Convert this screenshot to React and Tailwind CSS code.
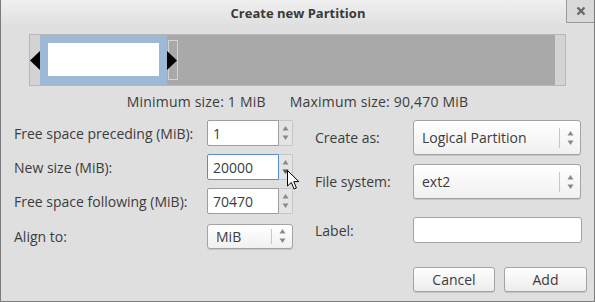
import React from 'react';

const font = { fontFamily: '"Open Sans", "Noto Sans", sans-serif' };

function Arrows({ dark }) {
  return (
    <svg width="7" height="16" viewBox="0 0 7 16">
      <path d="M3.5 1 L6.5 5.5 L0.5 5.5 Z" fill="#8a8a8a" />
      <path d="M0.5 10.5 L6.5 10.5 L3.5 15 Z" fill={dark ? '#555' : '#8a8a8a'} />
    </svg>
  );
}

function Spin({ value, focused, dark }) {
  return (
    <div className="flex h-[26px]">
      <div
        className={`w-[72px] h-full bg-white rounded-l-[2px] border flex items-center pl-[5px] text-[14px] text-[#3c3c3c] ${
          focused ? 'border-[#5b8dd0]' : 'border-[#9d9d9d]'
        }`}
      >
        {value}
      </div>
      <div className="w-[14px] h-full border-t border-b border-r border-[#c6c6c6] rounded-r-[2px] bg-[#e4e4e4] flex items-center justify-center">
        <Arrows dark={dark} />
      </div>
    </div>
  );
}

function Combo({ value, w, h, sep }) {
  return (
    <div
      className={`${w} ${h} rounded-[3px] border border-[#a3a3a3] bg-gradient-to-b from-white to-[#f0f0f0] shadow-[0_1px_0_#c4c4c4] flex items-center text-[14px] text-[#3c3c3c]`}
    >
      <div className="flex-1 pl-[8px]">{value}</div>
      <div className={`w-px ${sep} bg-[#c6c6c6]`} />
      <div className="w-[20px] flex justify-center">
        <Arrows />
      </div>
    </div>
  );
}

function Button({ children, w }) {
  return (
    <div
      className={`${w} h-[25px] rounded-[3px] border border-[#a3a3a3] bg-gradient-to-b from-white to-[#ececec] shadow-[0_1px_0_#c4c4c4] flex items-center justify-center text-[14px] text-[#3c3c3c]`}
    >
      {children}
    </div>
  );
}

export default function App() {
  return (
    <div style={font} className="w-[595px] h-[302px] bg-[#dfdfdf] border-l border-r border-b border-[#7b7b7b] relative overflow-hidden text-[#3c3c3c]">
      {/* title bar */}
      <div className="h-[28px] flex bg-gradient-to-b from-[#f0f0f0] to-[#dedede]">
        <div className="w-[29px]" />
        <div className="flex-1 flex items-center justify-center text-[13px] font-bold text-[#3a3a3a]">
          Create new Partition
        </div>
        <div className="w-[28px] h-[23px] border-l border-b border-[#9a9a9a] bg-[#d9d9d9] flex items-center justify-center">
          <svg width="10" height="10" viewBox="0 0 10 10">
            <path d="M1.5 1.5 L8.5 8.5 M8.5 1.5 L1.5 8.5" stroke="#6a6a6a" strokeWidth="2.4" />
          </svg>
        </div>
      </div>

      {/* partition graphic */}
      <div className="relative mx-[28px] mt-[6px] h-[52px] border border-[#b8b8b8] bg-[#a9a9a9] flex">
        <div className="w-[10px] bg-[#d3d3d3]" />
        <div className="w-[127px] bg-[#9db9d5] pt-[8px] pb-[9px] px-[8px]">
          <div className="w-full h-full bg-white" />
        </div>
        <div className="flex-1" />
        <div className="w-[10px] bg-[#d3d3d3]" />
        <div className="absolute left-[138px] top-[5px] w-[10px] h-[40px] border border-[#d4d4d4]" />
        <svg className="absolute left-0 top-[16px]" width="10" height="19" viewBox="0 0 10 19">
          <path d="M0 9.5 L10 0 L10 19 Z" fill="#000" />
        </svg>
        <svg className="absolute left-[137px] top-[16px]" width="10" height="19" viewBox="0 0 10 19">
          <path d="M10 9.5 L0 0 L0 19 Z" fill="#000" />
        </svg>
      </div>

      <div className="mt-[7px] h-[16px] flex justify-center items-center gap-[24px] text-[14px] tracking-[0.2px]">
        <span>Minimum size: 1 MiB</span>
        <span>Maximum size: 90,470 MiB</span>
      </div>

      {/* form */}
      <div className="mt-[11px] flex">
        <div className="ml-[13px] w-[279px] flex flex-col gap-[8px] text-[14px]">
          <div className="flex items-center h-[26px]">
            <div className="w-[193px]">Free space preceding (MiB):</div>
            <Spin value="1" />
          </div>
          <div className="flex items-center h-[26px]">
            <div className="w-[193px]">New size (MiB):</div>
            <Spin value="20000" focused dark />
          </div>
          <div className="flex items-center h-[26px]">
            <div className="w-[193px]">Free space following (MiB):</div>
            <Spin value="70470" />
          </div>
          <div className="flex items-center h-[26px] mt-[1px]">
            <div className="w-[193px]">Align to:</div>
            <Combo value="MiB" w="w-[86px]" h="h-[25px]" sep="h-[15px]" />
          </div>
        </div>

        <div className="ml-[22px] flex-1 flex flex-col text-[14px]">
          <div className="flex items-center">
            <div className="w-[98px]">Create as:</div>
            <Combo value="Logical Partition" w="w-[168px]" h="h-[35px]" sep="h-[20px]" />
          </div>
          <div className="flex items-center mt-[9px]">
            <div className="w-[98px]">File system:</div>
            <Combo value="ext2" w="w-[168px]" h="h-[35px]" sep="h-[20px]" />
          </div>
          <div className="flex items-center mt-[18px]">
            <div className="w-[98px]">Label:</div>
            <div className="w-[169px] h-[26px] bg-white border border-[#a3a3a3] rounded-[3px]" />
          </div>
          <div className="flex mt-[24px] ml-[98px] gap-[9px]">
            <Button w="w-[82px]">Cancel</Button>
            <Button w="w-[83px]">Add</Button>
          </div>
        </div>
      </div>

      {/* mouse pointer */}
      <svg className="absolute left-[286px] top-[170px]" width="13" height="21" viewBox="0 0 13 21">
        <path d="M0.5 0.5 L0.5 16 L4.3 12.4 L7 19 L9.4 18 L6.8 11.6 L11.8 11.6 Z" fill="#fff" stroke="#000" strokeWidth="1" strokeLinejoin="round" />
      </svg>
    </div>
  );
}
